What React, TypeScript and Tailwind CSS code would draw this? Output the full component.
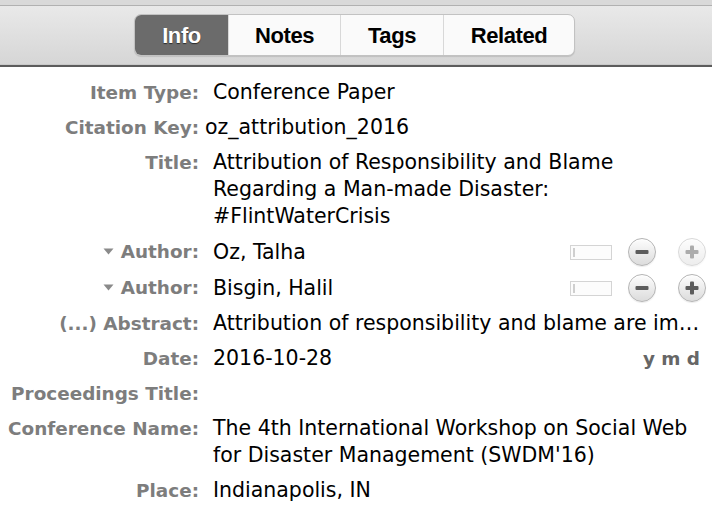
import React from 'react';

type Field = {
  label: string;
  value?: string[];
  kind?: 'author' | 'abstract' | 'date' | 'key';
  plusEnabled?: boolean;
};

const fields: Field[] = [
  { label: 'Item Type:', value: ['Conference Paper'] },
  { label: 'Citation Key:', value: ['oz_attribution_2016'], kind: 'key' },
  {
    label: 'Title:',
    value: [
      'Attribution of Responsibility and Blame',
      'Regarding a Man-made Disaster:',
      '#FlintWaterCrisis',
    ],
  },
  { label: 'Author:', value: ['Oz, Talha'], kind: 'author', plusEnabled: false },
  { label: 'Author:', value: ['Bisgin, Halil'], kind: 'author', plusEnabled: true },
  {
    label: '(...) Abstract:',
    value: ['Attribution of responsibility and blame are important to understand the public'],
    kind: 'abstract',
  },
  { label: 'Date:', value: ['2016-10-28'], kind: 'date' },
  { label: 'Proceedings Title:' },
  {
    label: 'Conference Name:',
    value: ['The 4th International Workshop on Social Web', 'for Disaster Management (SWDM\'16)'],
  },
  { label: 'Place:', value: ['Indianapolis, IN'] },
];

function Triangle() {
  return (
    <svg width="11" height="7" viewBox="0 0 11 7" className="mr-[7px] mb-[3px] inline-block">
      <path d="M0.5 0.5 L10.5 0.5 L5.5 6.5 Z" fill="#8a8a8a" />
    </svg>
  );
}

function RoundButton({ sign, faded }: { sign: 'minus' | 'plus'; faded?: boolean }) {
  return (
    <div
      className={`flex h-[28px] w-[28px] items-center justify-center rounded-full border border-[#b4b4b4] bg-gradient-to-b from-[#fdfdfd] to-[#dcdcdc] shadow-[inset_0_1px_0_#fff,0_1px_1px_rgba(0,0,0,0.08)] ${
        faded ? 'opacity-50' : ''
      }`}
    >
      <svg width="16" height="16" viewBox="0 0 16 16">
        <rect x="1.5" y="6" width="13" height="4" rx="1" fill="#5c5c5c" />
        {sign === 'plus' && <rect x="6" y="1.5" width="4" height="13" rx="1" fill="#5c5c5c" />}
      </svg>
    </div>
  );
}

function AuthorControls({ plusEnabled }: { plusEnabled?: boolean }) {
  return (
    <div className="ml-auto flex items-center">
      <div className="flex h-[15px] w-[42px] items-center border border-[#d4d4d4] bg-[#fcfcfc] pl-[2px]">
        <div className="h-[9px] w-[2px] border border-[#cfcfcf] bg-white" />
      </div>
      <div className="ml-[16px]">
        <RoundButton sign="minus" />
      </div>
      <div className="ml-[22px]">
        <RoundButton sign="plus" faded={!plusEnabled} />
      </div>
    </div>
  );
}

function Row({ field }: { field: Field }) {
  return (
    <div className="flex py-[4px] pr-[6px] leading-[27px]">
      <div className="w-[213px] shrink-0 whitespace-nowrap pr-[14px] text-right text-[18.4px] font-bold text-[#7d7d7d]">
        {field.kind === 'author' && <Triangle />}
        {field.label}
      </div>
      <div
        className={`flex min-w-0 flex-1 items-center text-[20.5px] text-black ${
          field.kind === 'key' ? '-ml-[8px]' : ''
        }`}
      >
        {field.kind === 'abstract' ? (
          <div className="mr-[2px] truncate">{field.value?.[0]}</div>
        ) : (
          <div className="whitespace-nowrap">
            {field.value?.map((line, i) => (
              <div key={i}>{line}</div>
            ))}
          </div>
        )}
        {field.kind === 'author' && <AuthorControls plusEnabled={field.plusEnabled} />}
        {field.kind === 'date' && (
          <div className="ml-auto mr-[6px] text-[18.4px] font-bold text-[#666]">y m d</div>
        )}
      </div>
    </div>
  );
}

export default function App() {
  const tabs = [
    { name: 'Info', w: 'w-[93px]' },
    { name: 'Notes', w: 'w-[112px]' },
    { name: 'Tags', w: 'w-[103px]' },
    { name: 'Related', w: 'w-[131px]' },
  ];

  return (
    <div className="h-[506px] w-[712px] overflow-hidden bg-white font-['DejaVu_Sans',sans-serif]">
      <div className="h-[6px] border-b border-[#b1b1b1] bg-[#d9d9d9]" />
      <div className="flex h-[59px] items-center justify-center border-b border-[#c9c9c9] bg-gradient-to-b from-[#e9e9e9] to-[#d6d6d6] pr-[3px]">
        <div className="flex h-[42px] overflow-hidden rounded-[7px] border border-[#c2c2c2] bg-[#fafafa] font-['Liberation_Sans',Arial,sans-serif] text-[22px] font-bold tracking-[-0.4px] shadow-[0_1px_1px_rgba(0,0,0,0.12)]">
          {tabs.map((t, i) => (
            <div
              key={t.name}
              className={`flex items-center justify-center ${t.w} ${
                i === 0
                  ? 'bg-[#6b6b6b] text-white [text-shadow:0_1px_1px_rgba(0,0,0,0.6)]'
                  : 'border-l border-[#d8d8d8] text-black'
              }`}
            >
              {t.name}
            </div>
          ))}
        </div>
      </div>
      <div className="h-[2px] bg-[#5c5c5c]" />
      <div className="pt-[8px]">
        {fields.map((f, i) => (
          <Row key={i} field={f} />
        ))}
      </div>
    </div>
  );
}
